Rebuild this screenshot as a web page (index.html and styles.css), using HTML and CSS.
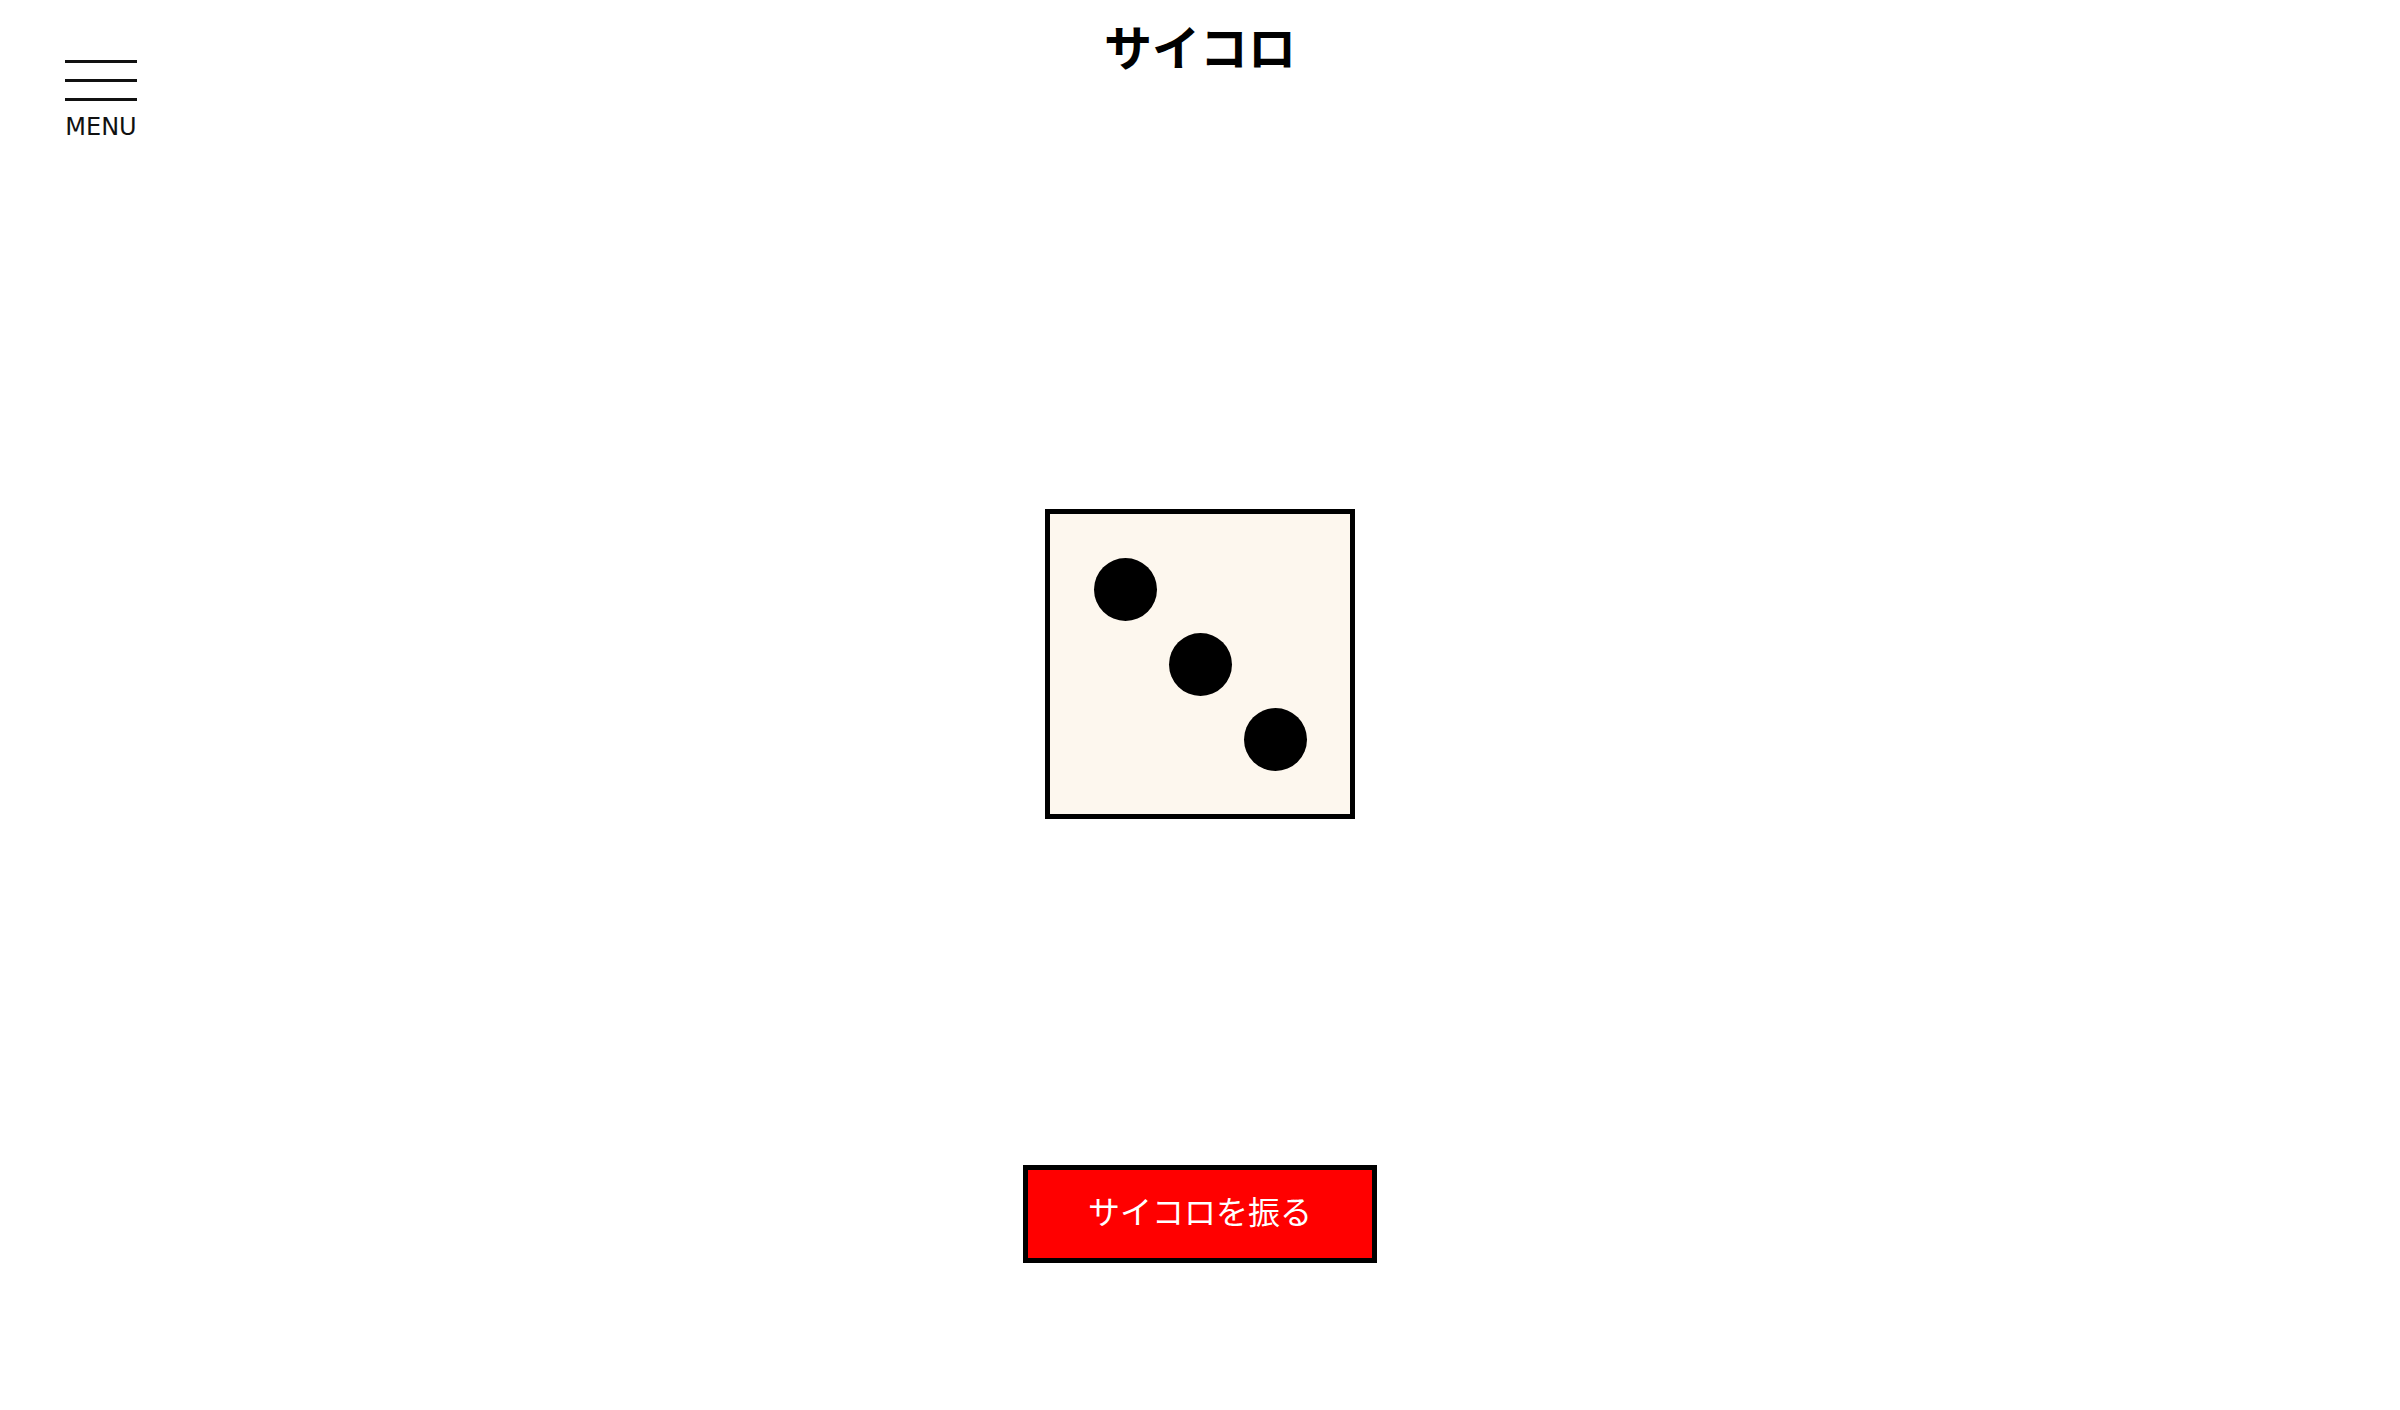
FILE: index.html
```html
<!DOCTYPE html>
<html lang="ja">
<head>
<meta charset="utf-8">
<title>サイコロ</title>
<link rel="stylesheet" href="styles.css">
</head>
<body>
<header class="header">
  <button class="menu" type="button">
    <span class="menu-bars"><span></span><span></span><span></span></span>
    <span class="menu-label">MENU</span>
  </button>
  <h1 class="title">サイコロ</h1>
  <div class="spacer"></div>
</header>
<main class="main">
  <div class="dice">
    <span class="pip p1"></span>
    <span class="pip p5"></span>
    <span class="pip p9"></span>
  </div>
  <button class="roll" type="button">サイコロを振る</button>
</main>
</body>
</html>
```
FILE: styles.css
```css
html, body {
  margin: 0;
  padding: 0;
  background: #ffffff;
}
body {
  font-family: "DejaVu Sans", "Noto Sans CJK JP", sans-serif;
  color: #000;
}
.header {
  display: grid;
  grid-template-columns: 1fr auto 1fr;
  height: 140px;
}
.menu {
  justify-self: start;
  align-self: start;
  margin: 60px 0 0 65px;
  padding: 0;
  border: 0;
  background: none;
  display: flex;
  flex-direction: column;
  align-items: center;
  cursor: pointer;
}
.menu-bars {
  display: flex;
  flex-direction: column;
  gap: 16px;
  width: 72px;
}
.menu-bars span {
  display: block;
  height: 3px;
  background: #111;
}
.menu-label {
  margin-top: 14px;
  font-family: "DejaVu Sans", sans-serif;
  font-size: 24px;
  line-height: 24px;
  color: #111;
}
.title {
  margin: 0;
  padding-top: 21px;
  font-family: "Noto Sans CJK JP", sans-serif;
  font-weight: 700;
  font-size: 48px;
  line-height: 48px;
}
.main {
  display: flex;
  flex-direction: column;
  align-items: center;
}
.dice {
  margin-top: 369px;
  width: 310px;
  height: 310px;
  box-sizing: border-box;
  border: 5px solid #000;
  background: #fdf7ee;
  display: grid;
  grid-template-columns: repeat(3, 75px);
  grid-template-rows: repeat(3, 75px);
  justify-content: center;
  align-content: center;
  place-items: center;
}
.pip {
  width: 63px;
  height: 63px;
  border-radius: 50%;
  background: #000;
}
.p1 { grid-area: 1 / 1; }
.p5 { grid-area: 2 / 2; }
.p9 { grid-area: 3 / 3; }
.roll {
  margin-top: 346px;
  width: 354px;
  height: 98px;
  box-sizing: border-box;
  border: 5px solid #000;
  background: #ff0000;
  color: #fff;
  font-family: "Noto Sans CJK JP", sans-serif;
  font-size: 32px;
  line-height: 1;
  padding: 0 0 8px;
  cursor: pointer;
}
```
